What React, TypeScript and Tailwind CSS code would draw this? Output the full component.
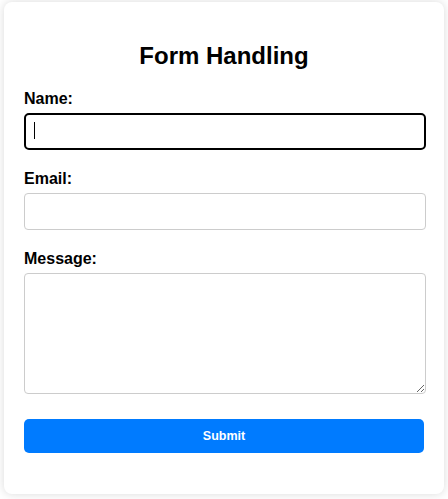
export default function App() {
  return (
    <div
      className="min-h-[499px] bg-white px-[4px] pt-[2px]"
      style={{ fontFamily: '"Liberation Sans", Arial, sans-serif' }}
    >
      <div className="w-[440px] rounded-lg bg-white px-5 pt-5 pb-[41px] shadow-[0_0_10px_rgba(0,0,0,0.15)]">
        <h2 className="my-5 text-center text-2xl leading-7 font-bold text-black">
          Form Handling
        </h2>
        <form onSubmit={(e) => e.preventDefault()}>
          <label className="mb-[5px] block text-base leading-[1.15] font-bold text-black">
            Name:
          </label>
          {/* focused field */}
          <div className="relative mb-5">
            <input
              type="text"
              className="block h-[36.4px] w-[402px] rounded-[5px] border-2 border-black bg-white px-2 text-base outline-none"
            />
            <div className="pointer-events-none absolute top-[9px] left-[10px] h-[17px] w-px bg-black" />
          </div>

          <label className="mb-[5px] block text-base leading-[1.15] font-bold text-black">
            Email:
          </label>
          <input
            type="email"
            className="mb-5 block h-[36.4px] w-[402px] rounded border border-[#ccc] bg-white px-2 text-base outline-none"
          />

          <label className="mb-[5px] block text-base leading-[1.15] font-bold text-black">
            Message:
          </label>
          <textarea className="mb-[25px] block h-[121px] w-[402px] rounded border border-[#ccc] bg-white p-2 text-base outline-none" />

          <button
            type="submit"
            className="block h-[34px] w-[400px] rounded-[5px] bg-[#007bff] pt-px text-[12.5px] font-bold text-white"
          >
            Submit
          </button>
        </form>
      </div>
    </div>
  );
}
